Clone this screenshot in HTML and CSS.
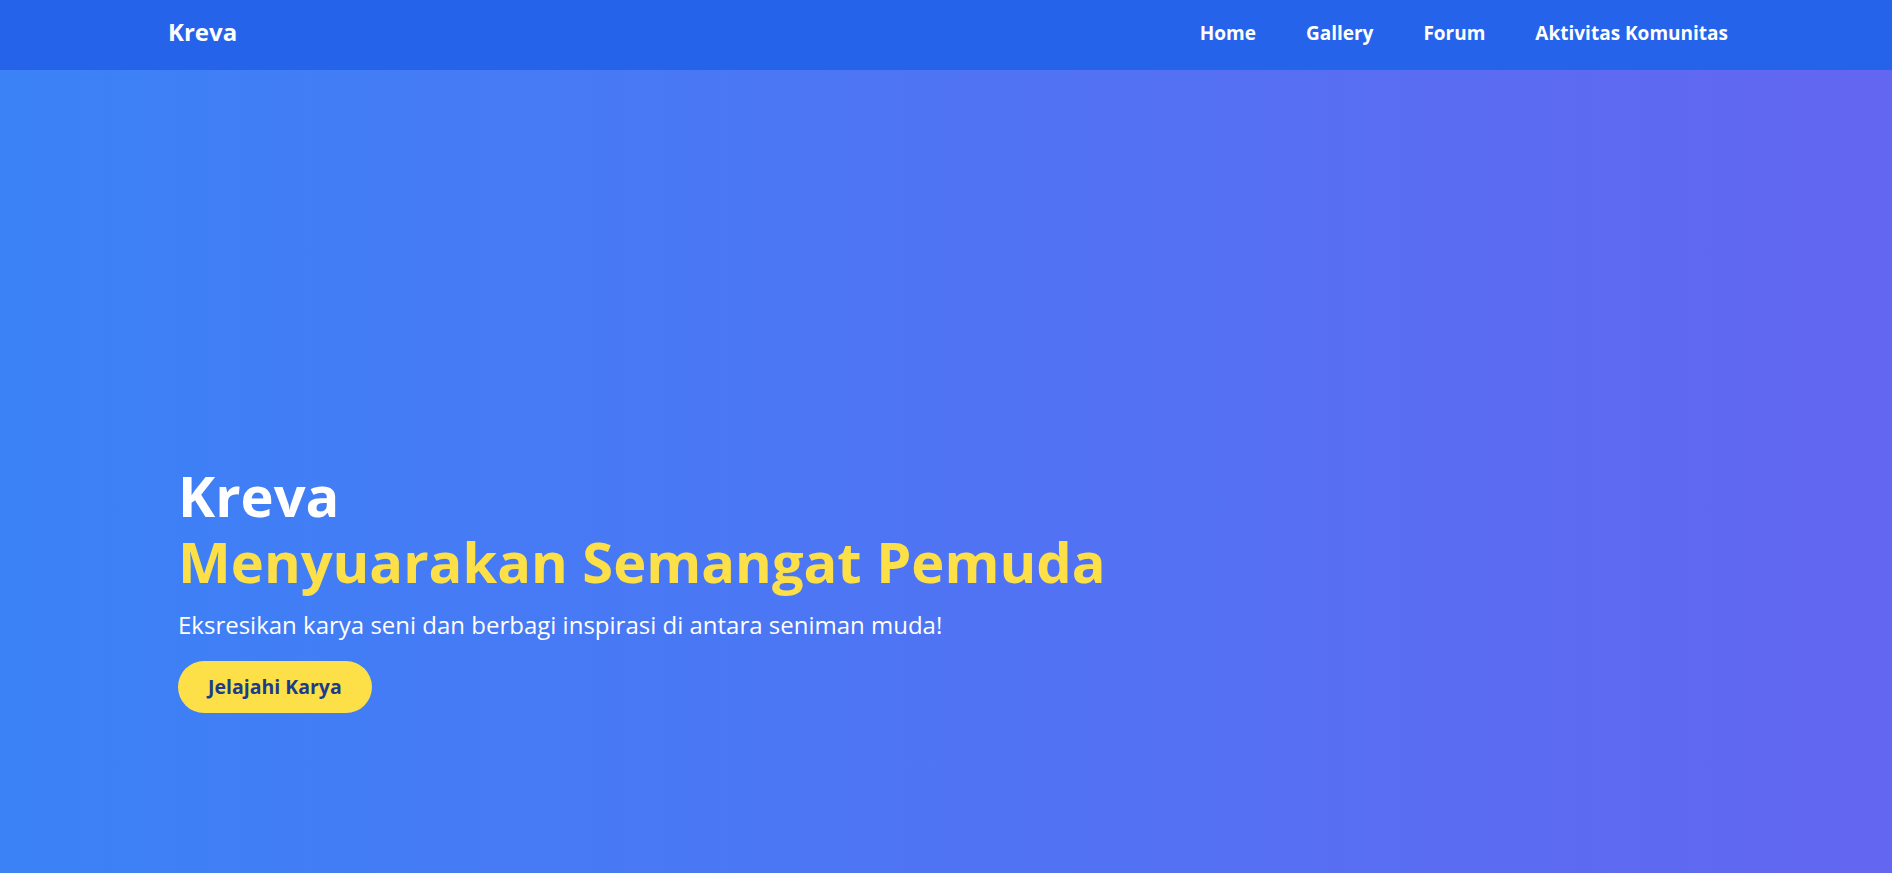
FILE: index.html
```html
<!DOCTYPE html>
<html lang="id">
<head>
<meta charset="utf-8">
<title>Kreva</title>
<link rel="stylesheet" href="styles.css">
</head>
<body>
<header class="site-header">
  <div class="header-inner">
    <a class="brand" href="#">Kreva</a>
    <nav class="nav">
      <a href="#">Home</a>
      <a href="#">Gallery</a>
      <a href="#">Forum</a>
      <a href="#">Aktivitas Komunitas</a>
    </nav>
  </div>
</header>
<section class="hero">
  <div class="hero-inner">
    <h1 class="hero-title">
      <span class="hero-brand">Kreva</span>
      <span class="hero-tagline">Menyuarakan Semangat Pemuda</span>
    </h1>
    <p class="hero-text">Eksresikan karya seni dan berbagi inspirasi di antara seniman muda!</p>
    <a class="hero-btn" href="#">Jelajahi Karya</a>
  </div>
</section>
</body>
</html>
```

FILE: styles.css
```css
* { box-sizing: border-box; }
html, body { margin: 0; padding: 0; }
body {
  font-family: "Open Sans", "Noto Sans", sans-serif;
  background: #3b82f6;
  overflow: hidden;
}
a { text-decoration: none; color: inherit; }

.site-header {
  background: #2563eb;
  height: 70px;
}
.header-inner {
  height: 100%;
  display: flex;
  align-items: center;
  justify-content: space-between;
  padding: 0 164px 5px 168px;
}
.brand {
  color: #fff;
  font-weight: 700;
  font-size: 24px;
  margin-bottom: 3px;
}
.nav {
  display: flex;
  gap: 50px;
}
.nav a {
  color: #fff;
  font-weight: 700;
  font-size: 19px;
}

.hero {
  height: 803px;
  background: linear-gradient(to right, #3b82f6, #6366f1);
  color: #fff;
}
.hero-inner {
  padding: 392px 0 0 178px;
  display: flex;
  flex-direction: column;
  align-items: flex-start;
}
.hero-title {
  margin: 0;
  font-size: 56px;
  font-weight: 700;
  line-height: 66px;
  display: flex;
  flex-direction: column;
}
.hero-brand { color: #fff; }
.hero-tagline { color: #fde047; }
.hero-text {
  margin: 15px 0 0;
  font-size: 24px;
  line-height: 32px;
}
.hero-btn {
  margin-top: 20px;
  background: #fde047;
  color: #1e3a8a;
  font-weight: 700;
  font-size: 19.5px;
  line-height: 28px;
  padding: 12px 30px;
  border-radius: 9999px;
}
```
